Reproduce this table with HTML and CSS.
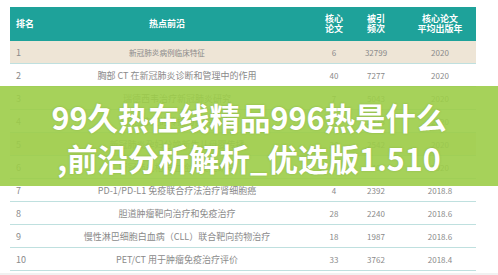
FILE: index.html
```html
<!DOCTYPE html>
<html lang="zh">
<head>
<meta charset="utf-8">
<link rel="stylesheet" href="styles.css">
</head>
<body>
<div class="page">
  <div class="table">
    <div class="row head">
      <div class="c1">排名</div>
      <div class="c2">热点前沿</div>
      <div class="c3">核心<br>论文</div>
      <div class="c4">被引<br>频次</div>
      <div class="c5">核心论文<br>平均出版年</div>
    </div>
    <div class="row shade first">
      <div class="c1">1</div><div class="c2">新冠肺炎病例临床特征</div><div class="c3">6</div><div class="c4">32799</div><div class="c5">2020</div>
    </div>
    <div class="row">
      <div class="c1">2</div><div class="c2">胸部 CT 在新冠肺炎诊断和管理中的作用</div><div class="c3">40</div><div class="c4">7277</div><div class="c5">2020</div>
    </div>
    <div class="row">
      <div class="c1">3</div><div class="c2">瑞德西韦治疗新冠肺炎研究</div><div class="c3">7</div><div class="c4">5043</div><div class="c5">2020</div>
    </div>
    <div class="row">
      <div class="c1">4</div><div class="c2">新冠肺炎的传播与防控研究</div><div class="c3">45</div><div class="c4">2878</div><div class="c5">2020</div>
    </div>
    <div class="row shade">
      <div class="c1">5</div><div class="c2">新冠肺炎孕妇分娩新生儿母婴传播</div><div class="c3">20</div><div class="c4">2542</div><div class="c5">2020</div>
    </div>
    <div class="row">
      <div class="c1">6</div><div class="c2">新冠肺炎相关血栓并发症研究</div><div class="c3">9</div><div class="c4">1404</div><div class="c5">2020</div>
    </div>
    <div class="row">
      <div class="c1">7</div><div class="c2">PD-1/PD-L1 免疫联合疗法治疗肾细胞癌</div><div class="c3">4</div><div class="c4">2392</div><div class="c5">2018.8</div>
    </div>
    <div class="row">
      <div class="c1">8</div><div class="c2">胆道肿瘤靶向治疗和免疫治疗</div><div class="c3">28</div><div class="c4">2240</div><div class="c5">2018.6</div>
    </div>
    <div class="row">
      <div class="c1">9</div><div class="c2">慢性淋巴细胞白血病（CLL）联合靶向药物治疗</div><div class="c3">18</div><div class="c4">1987</div><div class="c5">2018.6</div>
    </div>
    <div class="row">
      <div class="c1">10</div><div class="c2">PET/CT 用于肿瘤免疫治疗评价</div><div class="c3">33</div><div class="c4">3762</div><div class="c5">2018.4</div>
    </div>
  </div>
  <div class="foot"></div>
  <div class="banner">
    <p>99久热在线精品996热是什么</p>
    <p>,前沿分析解析_优选版1.510</p>
  </div>
</div>
</body>
</html>
```
FILE: styles.css
```css
* { box-sizing: border-box; }
html, body { margin: 0; padding: 0; background: #ffffff; }
body {
  width: 498px;
  height: 275px;
  overflow: hidden;
  font-family: "Noto Sans CJK SC", "Noto Sans", sans-serif;
}
.page {
  position: relative;
  width: 498px;
  height: 275px;
  padding-top: 7px;
}
.table {
  margin-left: 10px;
  width: 466px;
}
.row {
  display: grid;
  grid-template-columns: 50px 253px 42px 42px 79px;
  align-items: center;
  height: 23px;
  border-bottom: 1px solid #bfe0df;
  font-size: 9px;
  color: #8a8a8a;
}
.row > div { text-align: center; white-space: nowrap; }
.row .c1 { text-align: left; padding-left: 6px; }
.row .c2 { padding-right: 19px; }
.row .c5 { padding-left: 7px; }
.row .c3, .row .c4, .row .c5 { font-size: 8px; }
.row.first .c2 { font-size: 7.6px; padding-right: 39px; }
.head {
  height: 34px;
  background: #1ea29a;
  border-bottom: none;
  color: #ffffff;
  font-weight: 700;
  font-size: 9px;
  line-height: 10px;
}
.head .c2 { padding-right: 39px; }
.head .c3, .head .c4, .head .c5 { font-size: 9px; }
.shade { background: #eee5d6; }
.foot {
  margin-top: 2px;
  height: 10px;
  background: #f1f1f1;
}
.banner {
  position: absolute;
  left: 0;
  top: 86px;
  width: 498px;
  height: 100px;
  padding-top: 11px;
  background: rgba(156, 205, 72, 0.9);
  text-align: center;
  color: #ffffff;
  font-weight: 700;
  font-size: 30.5px;
  line-height: 41px;
  text-shadow: 0 0 2px rgba(90, 120, 40, 0.35);
}
.banner p { margin: 0; white-space: nowrap; }
```
